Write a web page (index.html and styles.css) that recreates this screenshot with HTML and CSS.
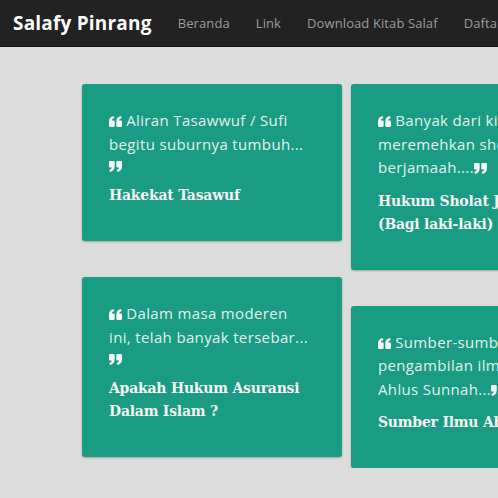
FILE: index.html
```html
<!DOCTYPE html>
<html lang="id">
<head>
  <meta charset="UTF-8">
  <meta name="viewport" content="width=device-width, initial-scale=1.0">
  <title>Salafy Pinrang</title>
  <link rel="stylesheet" href="styles.css">
</head>
<body>

  <nav class="navbar">
    <a class="brand" href="#">Salafy Pinrang</a>
    <ul class="nav-links">
      <li><a href="#">Beranda</a></li>
      <li><a href="#">Link</a></li>
      <li><a href="#">Download Kitab Salaf</a></li>
      <li><a href="#">Daftar Isi</a></li>
    </ul>
  </nav>

  <div class="grid">
    <div class="column">
      <div class="card">
        <p class="card-text"><span><svg class="quote" viewBox="0 0 24 20"><path d="M0 10.5C0 4.5 3 1 8.5 0L10 3.6C7 4.5 5.6 6 5.3 8H8.5C9.6 8 10.5 8.9 10.5 10V18C10.5 19.1 9.6 20 8.5 20H2C0.9 20 0 19.1 0 18Z M13.5 10.5C13.5 4.5 16.5 1 22 0L23.5 3.6C20.5 4.5 19.1 6 18.8 8H22C23.1 8 24 8.9 24 10V18C24 19.1 23.1 20 22 20H15.5C14.4 20 13.5 19.1 13.5 18Z"/></svg> Aliran Tasawwuf / Sufi begitu suburnya tumbuh...</span><svg class="quote" viewBox="0 0 24 20"><path transform="rotate(180 12 10)" d="M0 10.5C0 4.5 3 1 8.5 0L10 3.6C7 4.5 5.6 6 5.3 8H8.5C9.6 8 10.5 8.9 10.5 10V18C10.5 19.1 9.6 20 8.5 20H2C0.9 20 0 19.1 0 18Z M13.5 10.5C13.5 4.5 16.5 1 22 0L23.5 3.6C20.5 4.5 19.1 6 18.8 8H22C23.1 8 24 8.9 24 10V18C24 19.1 23.1 20 22 20H15.5C14.4 20 13.5 19.1 13.5 18Z"/></svg></p>
        <h2 class="card-title">Hakekat Tasawuf</h2>
      </div>
      <div class="card">
        <p class="card-text"><span><svg class="quote" viewBox="0 0 24 20"><path d="M0 10.5C0 4.5 3 1 8.5 0L10 3.6C7 4.5 5.6 6 5.3 8H8.5C9.6 8 10.5 8.9 10.5 10V18C10.5 19.1 9.6 20 8.5 20H2C0.9 20 0 19.1 0 18Z M13.5 10.5C13.5 4.5 16.5 1 22 0L23.5 3.6C20.5 4.5 19.1 6 18.8 8H22C23.1 8 24 8.9 24 10V18C24 19.1 23.1 20 22 20H15.5C14.4 20 13.5 19.1 13.5 18Z"/></svg> Dalam masa moderen ini, telah banyak tersebar...</span><svg class="quote" viewBox="0 0 24 20"><path transform="rotate(180 12 10)" d="M0 10.5C0 4.5 3 1 8.5 0L10 3.6C7 4.5 5.6 6 5.3 8H8.5C9.6 8 10.5 8.9 10.5 10V18C10.5 19.1 9.6 20 8.5 20H2C0.9 20 0 19.1 0 18Z M13.5 10.5C13.5 4.5 16.5 1 22 0L23.5 3.6C20.5 4.5 19.1 6 18.8 8H22C23.1 8 24 8.9 24 10V18C24 19.1 23.1 20 22 20H15.5C14.4 20 13.5 19.1 13.5 18Z"/></svg></p>
        <h2 class="card-title">Apakah Hukum Asuransi Dalam Islam ?</h2>
      </div>
    </div>

    <div class="column">
      <div class="card">
        <p class="card-text"><span><svg class="quote" viewBox="0 0 24 20"><path d="M0 10.5C0 4.5 3 1 8.5 0L10 3.6C7 4.5 5.6 6 5.3 8H8.5C9.6 8 10.5 8.9 10.5 10V18C10.5 19.1 9.6 20 8.5 20H2C0.9 20 0 19.1 0 18Z M13.5 10.5C13.5 4.5 16.5 1 22 0L23.5 3.6C20.5 4.5 19.1 6 18.8 8H22C23.1 8 24 8.9 24 10V18C24 19.1 23.1 20 22 20H15.5C14.4 20 13.5 19.1 13.5 18Z"/></svg> Banyak dari kita yang meremehkan sholat berjamaah....</span><svg class="quote" viewBox="0 0 24 20"><path transform="rotate(180 12 10)" d="M0 10.5C0 4.5 3 1 8.5 0L10 3.6C7 4.5 5.6 6 5.3 8H8.5C9.6 8 10.5 8.9 10.5 10V18C10.5 19.1 9.6 20 8.5 20H2C0.9 20 0 19.1 0 18Z M13.5 10.5C13.5 4.5 16.5 1 22 0L23.5 3.6C20.5 4.5 19.1 6 18.8 8H22C23.1 8 24 8.9 24 10V18C24 19.1 23.1 20 22 20H15.5C14.4 20 13.5 19.1 13.5 18Z"/></svg></p>
        <h2 class="card-title">Hukum Sholat Jamaah (Bagi laki-laki)</h2>
      </div>
      <div class="card">
        <p class="card-text"><span><svg class="quote" viewBox="0 0 24 20"><path d="M0 10.5C0 4.5 3 1 8.5 0L10 3.6C7 4.5 5.6 6 5.3 8H8.5C9.6 8 10.5 8.9 10.5 10V18C10.5 19.1 9.6 20 8.5 20H2C0.9 20 0 19.1 0 18Z M13.5 10.5C13.5 4.5 16.5 1 22 0L23.5 3.6C20.5 4.5 19.1 6 18.8 8H22C23.1 8 24 8.9 24 10V18C24 19.1 23.1 20 22 20H15.5C14.4 20 13.5 19.1 13.5 18Z"/></svg> Sumber-sumber pengambilan ilmu dalam Ahlus Sunnah...</span><svg class="quote" viewBox="0 0 24 20"><path transform="rotate(180 12 10)" d="M0 10.5C0 4.5 3 1 8.5 0L10 3.6C7 4.5 5.6 6 5.3 8H8.5C9.6 8 10.5 8.9 10.5 10V18C10.5 19.1 9.6 20 8.5 20H2C0.9 20 0 19.1 0 18Z M13.5 10.5C13.5 4.5 16.5 1 22 0L23.5 3.6C20.5 4.5 19.1 6 18.8 8H22C23.1 8 24 8.9 24 10V18C24 19.1 23.1 20 22 20H15.5C14.4 20 13.5 19.1 13.5 18Z"/></svg></p>
        <h2 class="card-title">Sumber Ilmu Ahlul Haq</h2>
      </div>
    </div>
  </div>

</body>
</html>
```

FILE: styles.css
```css
body {
  margin: 0;
  padding: 0;
  background: #dcdcdc;
  font-family: "Open Sans", Arial, sans-serif;
  overflow: hidden;
}
.navbar {
  display: flex;
  align-items: center;
  height: 46px;
  background: #222;
  border-bottom: 1px solid #111;
  padding: 0 13px;
  white-space: nowrap;
}
.brand {
  color: #fff;
  font-size: 19px;
  font-weight: 700;
  letter-spacing: 0.2px;
  text-decoration: none;
  margin-right: 13px;
}
.nav-links {
  display: flex;
  list-style: none;
  margin: 0;
  padding: 0;
}
.nav-links a {
  display: block;
  padding: 0 13px;
  color: #9d9d9d;
  font-size: 13px;
  letter-spacing: 0.1px;
  text-decoration: none;
}
.grid {
  display: flex;
  align-items: flex-start;
  gap: 9px;
  padding: 37px 0 0 82px;
}
.column {
  display: flex;
  flex-direction: column;
  gap: 36px;
  width: 260px;
  flex-shrink: 0;
}
.card {
  background: #1a9b83;
  border-radius: 3px;
  box-shadow: 0 1px 2px rgba(0, 0, 0, 0.25);
  padding: 25px 32px 35px 27px;
}
.card-text {
  margin: 0;
  color: #e2f2ec;
  font-size: 15px;
  line-height: 18px;
  letter-spacing: 0.35px;
}
.card-text span {
  line-height: 23.5px;
}
.quote {
  width: 13px;
  height: 11px;
  margin-bottom: -1px;
  fill: #f6f6f6;
}
.card-title {
  margin: 9px 0 0;
  color: #f4f4f4;
  font-family: "DejaVu Serif Condensed", "DejaVu Serif", serif;
  font-stretch: condensed;
  font-size: 15.5px;
  line-height: 23px;
  letter-spacing: -0.2px;
  font-weight: 700;
}
```
